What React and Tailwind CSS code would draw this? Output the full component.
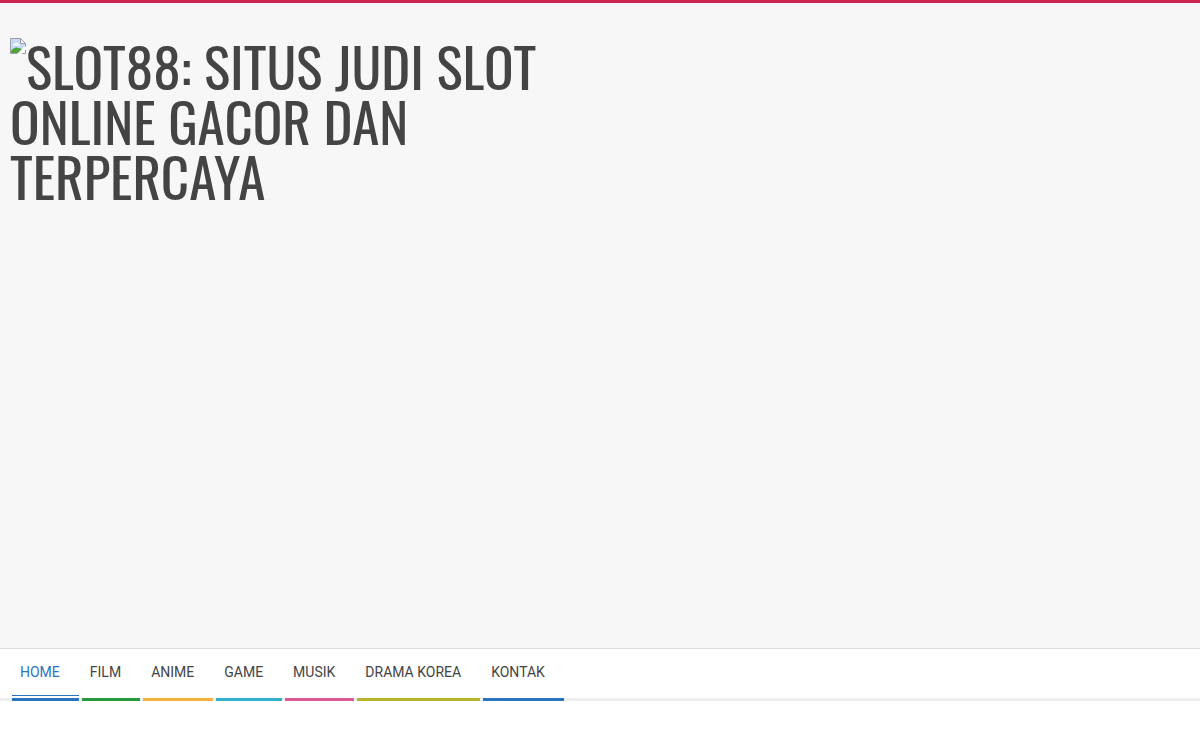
const menu = [
  { label: 'Home', bar: 'border-[#2c73bf]', active: true },
  { label: 'Film', bar: 'border-[#279a3d]' },
  { label: 'Anime', bar: 'border-[#f0b23c]' },
  { label: 'Game', bar: 'border-[#33b0cc]' },
  { label: 'Musik', bar: 'border-[#dc5a95]' },
  { label: 'Drama Korea', bar: 'border-[#b8b42a]' },
  { label: 'Kontak', bar: 'border-[#2c73bf]' },
];

function BrokenImage() {
  return (
    <svg className="size-4 shrink-0" viewBox="0 0 16 16" aria-hidden="true">
      <path d="M.5.5h10l5 5v10H.5z" fill="#fff" />
      <path d="M1 1h9.5v4.5H15V8L8 15H1z" fill="#c6d9f5" />
      <path d="M3 7.5C3 6 4 5.5 5 5.7 5.5 4 8 4 8.3 5.8c1.2-.1 1.7.7 1.7 1.7z" fill="#fff" />
      <path d="M1 15v-2c2-3 5-4.5 8-3l3 1-4 4z" fill="#4fa53a" />
      <path d="M7.5 16 16 7.5V11l-5 5z" fill="#fff" />
      <path d="M.5 15.5V.5h10l5 5v3M.5 15.5h7M10.5.5v5h5M12 15.5h3.5V12" fill="none" stroke="#9a9ca6" />
    </svg>
  );
}

function Header() {
  return (
    <header className="min-h-[648px] border-t-3 border-[#cf2350] bg-[#f7f7f7] px-2.5 pt-[35px]">
      <h1 className="font-[Oswald,'Liberation_Sans_Narrow','Liberation_Sans',sans-serif] text-[55px] leading-[55px] text-[#444] uppercase">
        <a href="#" className="block">
          <span className="flex items-start">
            <BrokenImage />
            <span>Slot88: Situs Judi Slot</span>
          </span>
          <span className="block">Online Gacor dan</span>
          <span className="block">Terpercaya</span>
        </a>
      </h1>
    </header>
  );
}

function NavBar() {
  return (
    <nav className="border-t border-b-3 border-t-[#ddd] border-b-[#eee] bg-white">
      <ul className="-mb-[3px] flex gap-[3px] px-3">
        {menu.map(({ label, bar, active }) => (
          <li key={label} className={`border-b-3 ${bar}`}>
            <a
              href="#"
              className={`mb-0.5 block border-b pt-[13px] pr-[19px] pb-[13px] pl-2 text-sm leading-5 uppercase ${
                active ? 'border-b-[#2c73bf] text-[#2c73bf]' : 'border-b-transparent text-[#444]'
              }`}
            >
              {label}
            </a>
          </li>
        ))}
      </ul>
    </nav>
  );
}

export default function App() {
  return (
    <div className="min-h-screen bg-white font-[Roboto,sans-serif]">
      <Header />
      <NavBar />
    </div>
  );
}
